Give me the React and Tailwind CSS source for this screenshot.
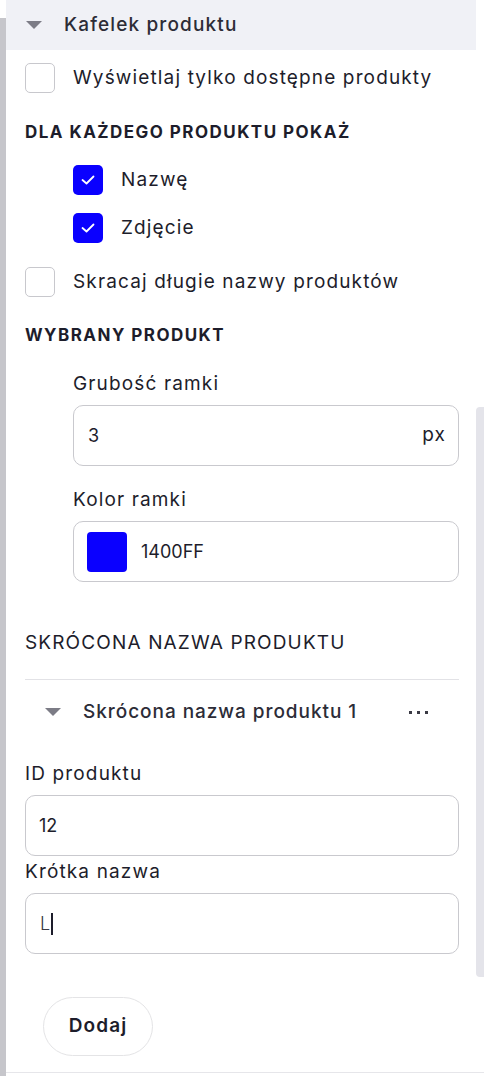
import React from "react";

// Product tile settings panel

const font = { fontFamily: "Inter, 'Noto Sans', sans-serif" };

function Caret({ className = "" }) {
  return (
    <svg width="16" height="8" viewBox="0 0 16 8" className={className}>
      <path d="M0 0 L16 0 L8 8 Z" fill="#7c7c86" />
    </svg>
  );
}

function Checkbox({ checked }) {
  if (checked) {
    return (
      <div className="w-[30px] h-[30px] rounded-[5px] bg-[#0a00ff] flex items-center justify-center shrink-0">
        <svg width="14" height="10" viewBox="0 0 14 10">
          <path d="M1.5 5 L5.5 8.5 L12.5 1.5" fill="none" stroke="white" strokeWidth="1.8" strokeLinecap="round" strokeLinejoin="round" />
        </svg>
      </div>
    );
  }
  return <div className="w-[30px] h-[30px] rounded-[5px] border border-[#c8c8cd] bg-white shrink-0" />;
}

function CheckRow({ checked, label, className = "" }) {
  return (
    <div className={`flex items-center gap-[18px] ${className}`}>
      <Checkbox checked={checked} />
      <span className="text-[19px] tracking-[0.06em] text-[#1d1d2b]">{label}</span>
    </div>
  );
}

function Heading({ children, className = "" }) {
  return (
    <div className={`text-[17px] leading-[20px] font-bold tracking-[0.086em] text-[#1d1d2b] ${className}`}>
      {children}
    </div>
  );
}

function Label({ children, className = "" }) {
  return <div className={`text-[19px] leading-[24px] tracking-[0.06em] text-[#1d1d2b] ${className}`}>{children}</div>;
}

function Field({ children, className = "" }) {
  return (
    <div className={`h-[61px] rounded-[10px] border border-[#c9c9ce] bg-white flex items-center ${className}`}>
      {children}
    </div>
  );
}

export default function App() {
  return (
    <div className="flex min-h-[1076px] bg-white" style={font}>
      {/* left rail */}
      <div className="w-[6px] mt-[18px] bg-[#c6c6cb] shrink-0" />

      <div className="flex-1 flex flex-col">
        <div className="flex flex-1">
          <div className="w-[470px] flex flex-col">
            {/* header */}
            <div className="h-[50px] bg-[#f0f1f6] flex items-center">
              <Caret className="ml-[20px]" />
              <span className="ml-[22px] text-[19px] font-medium tracking-[0.06em] text-[#2c2c37]">Kafelek produktu</span>
            </div>

            <div className="pl-[19px] pr-[17px] flex flex-col">
              <CheckRow className="mt-[13px]" label="Wyświetlaj tylko dostępne produkty" />

              <Heading className="mt-[29px]">DLA KAŻDEGO PRODUKTU POKAŻ</Heading>

              <CheckRow checked className="mt-[23px] ml-[48px]" label="Nazwę" />
              <CheckRow checked className="mt-[18px] ml-[48px]" label="Zdjęcie" />

              <CheckRow className="mt-[24px]" label="Skracaj długie nazwy produktów" />

              <Heading className="mt-[28px]">WYBRANY PRODUKT</Heading>

              <div className="ml-[48px] flex flex-col">
                <Label className="mt-[27px]">Grubość ramki</Label>
                <Field className="mt-[9px] pl-[14px] pr-[12px] justify-between">
                  <span className="text-[18px] text-[#1d1d2b]">3</span>
                  <span className="text-[19px] tracking-[0.06em] text-[#1d1d2b]">px</span>
                </Field>

                <Label className="mt-[22px]">Kolor ramki</Label>
                <Field className="mt-[9px] px-[13px]">
                  <div className="w-[40px] h-[40px] rounded-[4px] bg-[#0a00ff]" />
                  <span className="ml-[14px] text-[18px] text-[#1d1d2b]">1400FF</span>
                </Field>
              </div>

              <div className="mt-[49px] text-[19px] leading-[24px] tracking-[0.06em] text-[#1d1d2b]">SKRÓCONA NAZWA PRODUKTU</div>

              <div className="mt-[24px] h-px bg-[#e2e2e6]" />

              <div className="mt-[20px] h-[24px] flex items-center">
                <Caret className="ml-[20px]" />
                <span className="ml-[22px] text-[19px] font-medium tracking-[0.05em] text-[#2c2c37]">Skrócona nazwa produktu 1</span>
                <div className="ml-auto mr-[31px] flex gap-[5px]">
                  <span className="w-[3px] h-[3px] bg-[#3a3a44]" />
                  <span className="w-[3px] h-[3px] bg-[#3a3a44]" />
                  <span className="w-[3px] h-[3px] bg-[#3a3a44]" />
                </div>
              </div>

              <Label className="mt-[38px]">ID produktu</Label>
              <Field className="mt-[9px] px-[13px]">
                <span className="text-[18px] text-[#1d1d2b]">12</span>
              </Field>

              <Label className="mt-[4px]">Krótka nazwa</Label>
              <Field className="mt-[9px] px-[14px]">
                <span className="text-[18px] font-light text-[#3a3a44]">L</span>
                <span className="ml-[1px] w-[2px] h-[22px] bg-[#1d1d2b]" />
              </Field>

              <button className="mt-[43px] ml-[18px] w-[110px] h-[59px] rounded-full border border-[#e4e4e6] bg-white text-[19px] font-semibold tracking-[0.06em] text-[#1d1d2b]">
                Dodaj
              </button>
            </div>
          </div>

          {/* scrollbar */}
          <div className="flex-1">
            <div className="mt-[407px] h-[570px] bg-[#e4e4ea] rounded-l-[4px]" />
          </div>
        </div>

        <div className="h-[4px] border-t border-[#e6e6ea]" />
      </div>
    </div>
  );
}
